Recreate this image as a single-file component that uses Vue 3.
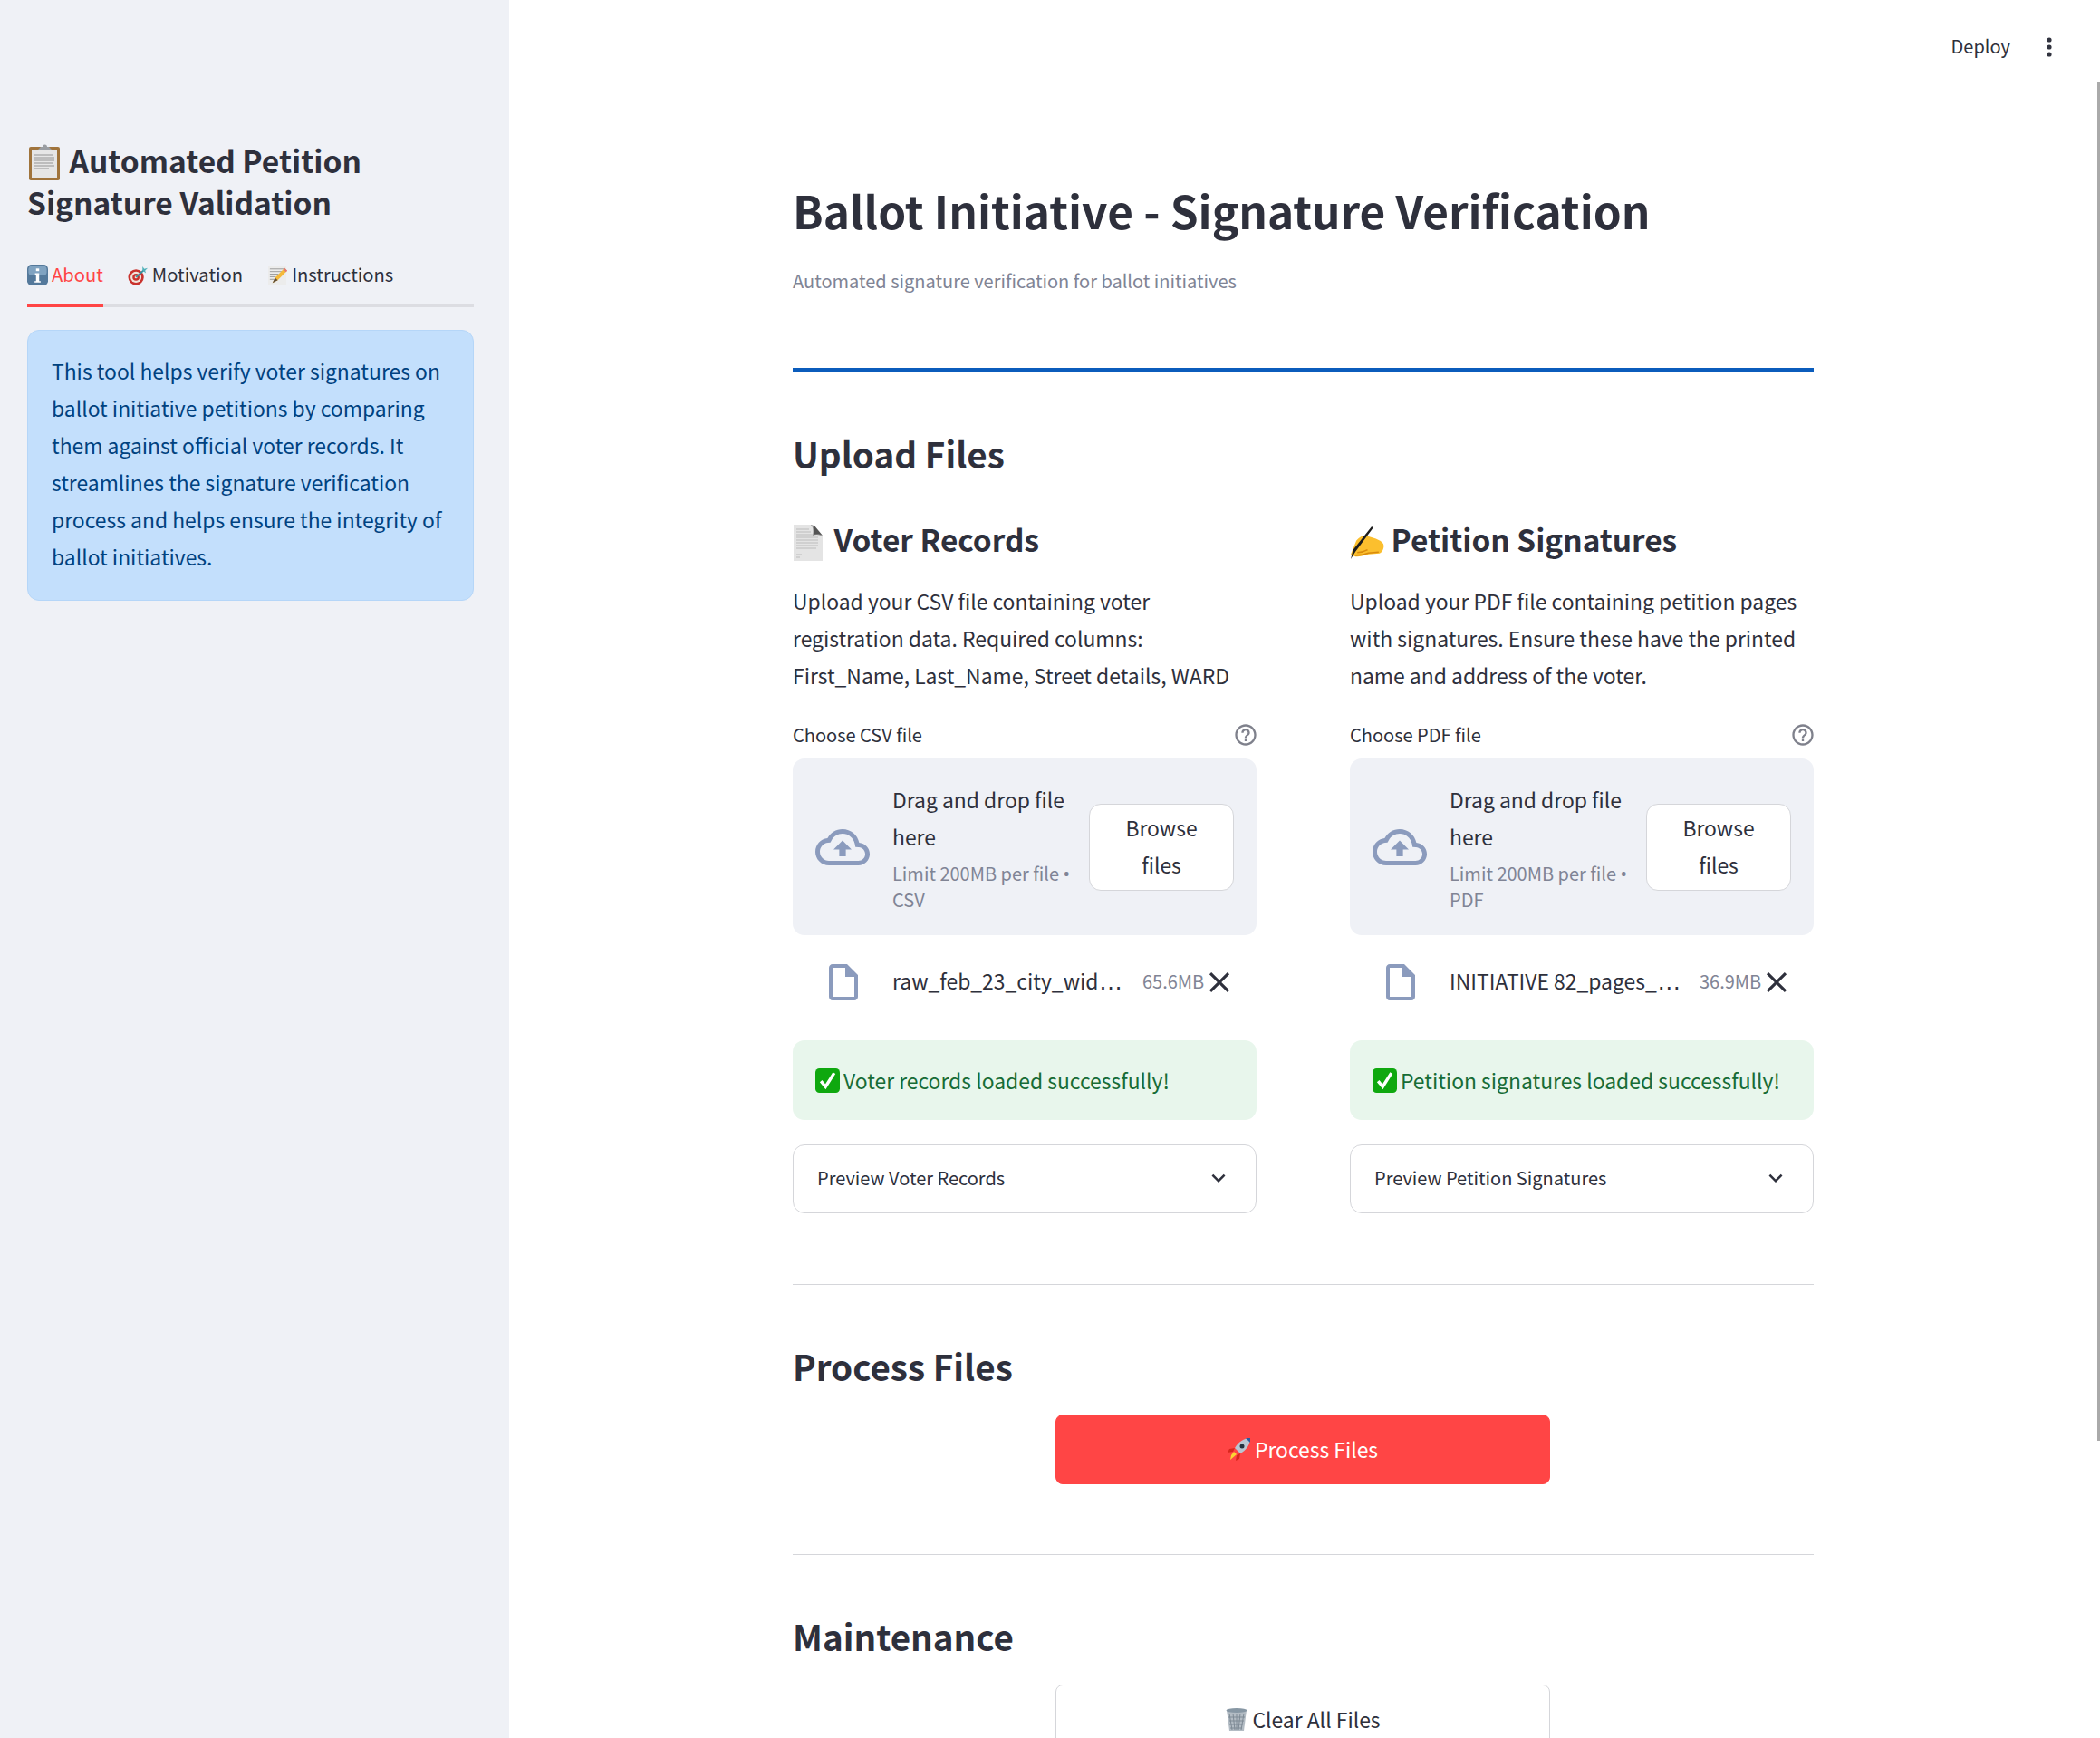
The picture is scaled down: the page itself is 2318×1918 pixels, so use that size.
<script setup>
const columns = [
  {
    key: 'voter',
    title: 'Voter Records',
    text: ['Upload your CSV file containing voter', 'registration data. Required columns:', 'First_Name, Last_Name, Street details, WARD'],
    label: 'Choose CSV file',
    type: 'CSV',
    fileName: 'raw_feb_23_city_wid',
    fileSize: '65.6MB',
    success: 'Voter records loaded successfully!',
    preview: 'Preview Voter Records'
  },
  {
    key: 'petition',
    title: 'Petition Signatures',
    text: ['Upload your PDF file containing petition pages', 'with signatures. Ensure these have the printed', 'name and address of the voter.'],
    label: 'Choose PDF file',
    type: 'PDF',
    fileName: 'INITIATIVE 82_pages_',
    fileSize: '36.9MB',
    success: 'Petition signatures loaded successfully!',
    preview: 'Preview Petition Signatures'
  }
]
</script>

<template>
  <div class="app">
    <aside class="sidebar">
      <h2 class="side-title">
        <svg class="emoji clip" viewBox="0 0 36 42">
          <rect x="1" y="4" width="34" height="37" rx="2" fill="#a0743c" />
          <rect x="4" y="7" width="28" height="31" fill="#e6e6e6" />
          <path d="M7 13h20M7 16h22M7 19h22M7 22h20M7 25h22M7 28h16" stroke="#bdbdbd" stroke-width="2" />
          <path d="M11 7l3-3h2a2.500 2.500 0 0 1 5 0h2l3 3z" fill="#9a9ea3" />
        </svg>
        Automated Petition Signature Validation
      </h2>

      <div class="tabs">
        <div class="tab active">
          <svg class="emoji tab-icon" viewBox="0 0 24 24">
            <rect width="24" height="24" rx="5" fill="#54799b" />
            <rect x="1.500" y="1.500" width="21" height="11" rx="4" fill="#80a3c1" />
            <rect x="10.200" y="4.500" width="3.600" height="3" fill="#fff" />
            <path d="M9 10h4.800v9H15.500v1.500h-7V19h1.700v-7.500H9z" fill="#fff" />
          </svg>
          About
        </div>
        <div class="tab">
          <svg class="emoji tab-icon" viewBox="0 0 24 24">
            <circle cx="9.500" cy="14.500" r="9" fill="#c9322d" />
            <circle cx="9.500" cy="14.500" r="6.300" fill="#f2e5dc" />
            <circle cx="9.500" cy="14.500" r="4" fill="#c9322d" />
            <circle cx="9.500" cy="14.500" r="1.500" fill="#f2e5dc" />
            <path d="M9.500 14.500L19 6" stroke="#3b8f9c" stroke-width="2" />
            <path d="M17 2l2 3 4-1-3 3 1 3-4-3z" fill="#4fb0b8" />
          </svg>
          Motivation
        </div>
        <div class="tab">
          <svg class="emoji tab-icon" viewBox="0 0 24 24">
            <rect x="1" y="1" width="21" height="22" fill="#ececec" />
            <path d="M3 5h16M3 8h16M3 11h10M3 14h7M3 17h5" stroke="#9a9a9a" stroke-width="1" />
            <path d="M6 21l3-6L20 4l3 3-11 11z" fill="#f4b93a" />
            <path d="M20 4l3 3-1.500 1.500-3-3z" fill="#e2757a" />
            <path d="M6 21l3-6 3 3z" fill="#5a4a3a" />
          </svg>
          Instructions
        </div>
      </div>

      <div class="info-box">
        This tool helps verify voter signatures on ballot initiative petitions by comparing
        them against official voter records. It streamlines the signature verification
        process and helps ensure the integrity of ballot initiatives.
      </div>
    </aside>

    <main class="main">
      <header class="toolbar">
        <span class="deploy">Deploy</span>
        <svg class="dots" viewBox="0 0 8 24">
          <circle cx="4" cy="4" r="2.600" />
          <circle cx="4" cy="12" r="2.600" />
          <circle cx="4" cy="20" r="2.600" />
        </svg>
      </header>

      <div class="content">
        <h1 class="page-title">Ballot Initiative - Signature Verification</h1>
        <p class="subtitle">Automated signature verification for ballot initiatives</p>
        <div class="blue-rule"></div>

        <h2 class="section first">Upload Files</h2>

        <div class="columns">
          <section v-for="col in columns" :key="col.key" class="column">
            <h3 class="col-title">
              <svg v-if="col.key === 'voter'" class="emoji page" viewBox="0 0 32 40">
                <path d="M0 0h22l10 12v28H0z" fill="#e4e4e4" />
                <path d="M3 5h14M3 8h16M3 11h18M3 14h24M3 17h24M3 20h24M3 23h24M3 26h22M3 33h6M3 36h4" stroke="#bcbcbc" stroke-width="1.200" />
                <path d="M19 0c3 3 3 8 2 12 4-2 8-1 11 1L20 0z" fill="#8b8b8b" />
                <path d="M22 0l10 12c-3-2-7-2-10-1 1-4 1-8 0-11z" fill="#555" />
              </svg>
              <svg v-else class="emoji hand" viewBox="0 0 37 35">
                <path d="M1 30L7 15Q12 9 18 10L28 13Q36 16 36.500 21Q36 27 32 29L20 30Q10 33 5 32z" fill="#fbbf2e" />
                <path d="M6 31Q14 31 20 28.500L31 27.500M8 28Q14 28 19 25" fill="none" stroke="#d98a0c" stroke-width="1.500" />
                <path d="M23.500 0L25 1.500L6 27L1 35L3.500 25z" fill="#1c1c1c" />
              </svg>
              {{ col.title }}
            </h3>
            <p class="col-text">
              <span v-for="line in col.text" :key="line" class="line">{{ line }}</span>
            </p>

            <div class="label-row">
              <span>{{ col.label }}</span>
              <svg class="help" viewBox="0 0 24 24">
                <path d="M11 18h2v-2h-2v2zm1-16C6.480 2 2 6.480 2 12s4.480 10 10 10 10-4.480 10-10S17.520 2 12 2zm0 18c-4.410 0-8-3.590-8-8s3.590-8 8-8 8 3.590 8 8-3.590 8-8 8zm0-14c-2.210 0-4 1.790-4 4h2c0-1.100.900-2 2-2s2 .900 2 2c0 2-3 1.750-3 5h2c0-2.250 3-2.500 3-5 0-2.210-1.790-4-4-4z" />
              </svg>
            </div>

            <div class="dropzone">
              <svg class="cloud" viewBox="0 0 24 24">
                <path d="M19.350 10.040C18.670 6.590 15.640 4 12 4 9.110 4 6.600 5.640 5.350 8.040 2.340 8.360 0 10.910 0 14c0 3.310 2.690 6 6 6h13c2.760 0 5-2.240 5-5 0-2.640-2.050-4.780-4.650-4.960zM19 18H6c-2.210 0-4-1.790-4-4 0-2.050 1.530-3.760 3.560-3.970l1.070-.11.500-.95C8.080 7.140 9.940 6 12 6c2.620 0 4.880 1.860 5.390 4.430l.3 1.500 1.530.11c1.560.1 2.780 1.410 2.780 2.960 0 1.650-1.350 3-3 3zM8 13h2.550v3h2.900v-3H16l-4-4z" />
              </svg>
              <div class="drop-text">
                <div class="drop-main">Drag and drop file here</div>
                <div class="drop-limit">Limit 200MB per file <span class="latin">•</span> {{ col.type }}</div>
              </div>
              <button class="browse">Browse files</button>
            </div>

            <div class="file-row">
              <svg class="file-icon" viewBox="0 0 24 24">
                <path d="M14 2H6c-1.100 0-2 .9-2 2v16c0 1.100.9 2 2 2h12c1.100 0 2-.9 2-2V8l-6-6zM6 20V4h7v5h5v11H6z" />
              </svg>
              <span class="file-name">{{ col.fileName }}<span class="ellipsis">…</span></span>
              <span class="file-size">{{ col.fileSize }}</span>
              <svg class="file-x" viewBox="0 0 24 24">
                <path d="M19 6.410L17.590 5 12 10.590 6.410 5 5 6.410 10.590 12 5 17.590 6.410 19 12 13.410 17.590 19 19 17.590 13.410 12z" />
              </svg>
            </div>

            <div class="success">
              <svg class="emoji check" viewBox="0 0 24 24">
                <rect width="24" height="24" rx="4" fill="#0fa80f" />
                <path d="M5.500 12.500l4.500 5.500L18.500 4.500" fill="none" stroke="#fff" stroke-width="3" />
              </svg>
              {{ col.success }}
            </div>

            <div class="expander">
              <span>{{ col.preview }}</span>
              <svg class="chevron" viewBox="0 0 24 24">
                <path d="M16.590 8.590L12 13.170 7.410 8.590 6 10l6 6 6-6z" />
              </svg>
            </div>
          </section>
        </div>

        <hr class="rule" />

        <h2 class="section">Process Files</h2>
        <button class="wide-btn primary">
          <svg class="emoji btn-icon" viewBox="0 0 26 26">
            <path d="M8 12C12 5 18 1 25 1c0 7-4 13-11 17z" fill="#b9c6d2" />
            <path d="M20 1h5v5z" fill="#2c5aa0" />
            <circle cx="16" cy="10" r="2.500" fill="#24323f" />
            <path d="M8 12L2 13l-2 4 6-1zM14 18l-1 6-4 2 1-6z" fill="#d8261c" />
            <path d="M7 16l3 3-7 6 1-5z" fill="#fbd533" />
          </svg>
          Process Files
        </button>

        <hr class="rule" />

        <h2 class="section">Maintenance</h2>
        <button class="wide-btn secondary">
          <svg class="emoji btn-icon" viewBox="0 0 26 26">
            <path d="M2 3h22l-3 23H5z" fill="#b3bcc4" />
            <path d="M5 7l3 18M9 7l2 18M13 7v18M17 7l-2 18M21 7l-3 18M4 11h18M5 15h16M5 19h15M6 23h13" stroke="#7e8a95" stroke-width="1" />
            <ellipse cx="13" cy="3.500" rx="11.500" ry="2.500" fill="#8797a4" />
          </svg>
          Clear All Files
        </button>
      </div>

      <div class="scrollbar"></div>
    </main>
  </div>
</template>

<style>
html, body {
  margin: 0;
  background: #fff;
}
</style>

<style scoped>
.app {
  display: flex;
  width: 2318px;
  height: 1918px;
  overflow: hidden;
  font-family: "Noto Sans CJK SC", "Liberation Sans", sans-serif;
  color: #2e303c;
  font-size: 22.9px;
  line-height: 41px;
}

.latin {
  font-family: "Noto Sans", sans-serif;
}

.ellipsis {
  font-family: "Liberation Sans", sans-serif;
  font-size: 27px;
}

.emoji {
  flex: none;
  vertical-align: middle;
}

/* sidebar */
.sidebar {
  width: 562px;
  flex: none;
  box-sizing: border-box;
  background: #eff1f6;
  padding: 154px 39px 0 30px;
}

.side-title {
  margin: 0;
  font-size: 33.5px;
  line-height: 46px;
  font-weight: 600;
}

.clip {
  width: 38px;
  height: 42px;
  margin-right: 1px;
  vertical-align: -9px;
}

.tabs {
  display: flex;
  gap: 27px;
  margin-top: 36px;
  height: 54px;
  border-bottom: 3px solid #dcdde2;
  font-size: 20.2px;
}

.tab {
  display: flex;
  align-items: flex-start;
  gap: 4px;
  padding-top: 3px;
  line-height: 36px;
  height: 57px;
  box-sizing: border-box;
}

.tab.active {
  color: #ff4545;
  border-bottom: 3px solid #ff4545;
}

.tab-icon {
  width: 23px;
  height: 23px;
  margin-top: 7px;
}

.info-box {
  margin-top: 25px;
  padding: 24px 26px;
  box-sizing: border-box;
  height: 299px;
  background: #c3dffc;
  border: 1px solid #b5d6f8;
  border-radius: 13px;
  color: #004280;
}

/* main */
.main {
  position: relative;
  flex: 1;
  min-width: 0;
}

.toolbar {
  display: flex;
  justify-content: flex-end;
  align-items: center;
  gap: 39px;
  height: 104px;
  padding-right: 52px;
  font-size: 20px;
}

.deploy {
  margin-bottom: 3px;
}

.dots {
  width: 8px;
  height: 24px;
  fill: #31333f;
}

.content {
  width: 1127px;
  margin-left: 313px;
}

.page-title {
  margin: 93px 0 0;
  font-size: 49.5px;
  line-height: 70px;
  font-weight: 600;
}

.subtitle {
  margin: 27px 0 0;
  font-size: 20px;
  line-height: 32px;
  color: #808495;
}

.blue-rule {
  height: 5px;
  margin-top: 80px;
  background: #0b5cbc;
}

.section {
  margin: 60px 0 0;
  font-size: 38.6px;
  line-height: 58px;
  font-weight: 600;
}

.section.first {
  margin-top: 60px;
}

.columns {
  display: grid;
  grid-template-columns: 512px 512px;
  column-gap: 103px;
  margin-top: 41px;
}

.col-title {
  margin: 0;
  font-size: 33.4px;
  line-height: 50px;
  font-weight: 600;
}

.page {
  width: 34px;
  height: 40px;
  margin-right: 4px;
  vertical-align: -10px;
}

.hand {
  width: 38px;
  height: 36px;
  vertical-align: -8px;
}

.col-text {
  margin: 23px 0 0;
}

.line {
  display: block;
  white-space: nowrap;
}

.label-row {
  display: flex;
  justify-content: space-between;
  align-items: center;
  height: 36px;
  margin-top: 26px;
  font-size: 20px;
}

.help {
  width: 28px;
  height: 28px;
  margin: 2px -2px 0 0;
  fill: #7f818c;
}

.dropzone {
  display: flex;
  align-items: center;
  height: 195px;
  margin-top: 9px;
  box-sizing: border-box;
  padding: 0 25px;
  background: #eff1f6;
  border-radius: 13px;
}

.cloud {
  width: 60px;
  height: 60px;
  flex: none;
  fill: #8b9bbd;
}

.drop-text {
  width: 197px;
  margin-left: 25px;
  flex: none;
}

.drop-main {
  line-height: 41px;
}

.drop-limit {
  font-size: 20px;
  line-height: 28px;
  color: #808495;
  margin-top: 6px;
}

.browse {
  width: 160px;
  height: 96px;
  flex: none;
  margin-left: auto;
  padding: 0 30px 2px;
  background: #fff;
  border: 1px solid #d5d6da;
  border-radius: 13px;
  font: inherit;
  color: inherit;
}

.file-row {
  display: flex;
  align-items: center;
  height: 50px;
  margin-top: 27px;
  padding-left: 32px;
}

.file-icon {
  width: 48px;
  height: 48px;
  flex: none;
  fill: #8b9bbd;
}

.file-name {
  width: 254px;
  margin: 0 0 3px 30px;
  white-space: nowrap;
}

.file-size {
  margin: 0 0 3px 22px;
  font-size: 20px;
  color: #808495;
}

.file-x {
  width: 38px;
  height: 38px;
  margin-left: -2px;
  fill: #2e303c;
}

.success {
  display: flex;
  align-items: center;
  gap: 4px;
  height: 88px;
  margin-top: 39px;
  padding-left: 25px;
  background: #e8f6ec;
  border-radius: 13px;
  color: #176c36;
}

.check {
  width: 27px;
  height: 27px;
}

.expander {
  display: flex;
  justify-content: space-between;
  align-items: center;
  height: 76px;
  box-sizing: border-box;
  margin-top: 27px;
  padding: 0 26px 3px 26px;
  border: 1px solid #d5d6da;
  border-radius: 13px;
  font-size: 20px;
}

.chevron {
  width: 30px;
  height: 30px;
  fill: #2e303c;
}

.rule {
  margin: 78px 0 0;
  border: 0;
  border-top: 1px solid #d5d6da;
}

.wide-btn + .rule {
  margin-top: 77px;
}

.wide-btn {
  display: flex;
  align-items: center;
  justify-content: center;
  gap: 4px;
  width: 546px;
  height: 77px;
  margin: 25px 0 0 290px;
  padding-bottom: 2px;
  border-radius: 8px;
  font: inherit;
}

.primary {
  background: #ff4545;
  border: 1px solid #ff4545;
  color: #fff;
}

.secondary {
  background: #fff;
  border: 1px solid #d5d6da;
  color: #2e303c;
}

.btn-icon {
  width: 26px;
  height: 26px;
}

.scrollbar {
  position: absolute;
  top: 90px;
  right: 0;
  width: 3px;
  height: 1500px;
  background: #aaa;
}
</style>
